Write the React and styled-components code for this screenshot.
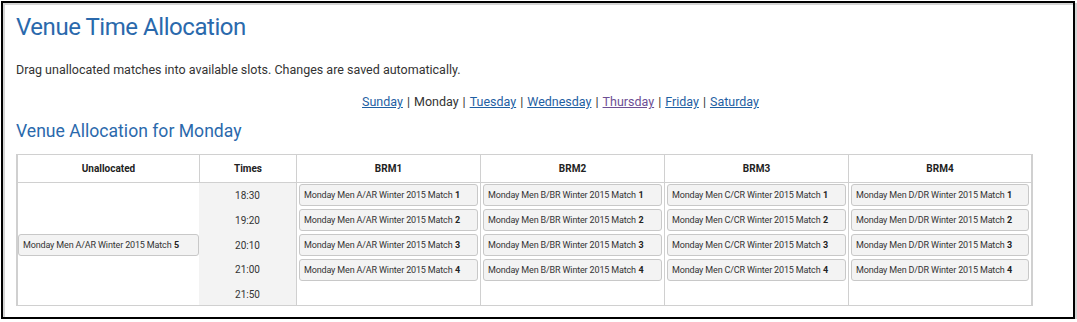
import React from 'react';
import styled, { createGlobalStyle } from 'styled-components';

const Global = createGlobalStyle`
  html, body { margin: 0; padding: 0; background: #fff; }
  body { font-family: Roboto, "Liberation Sans", sans-serif; color: #333; }
`;

const Frame = styled.div`
  box-sizing: border-box;
  margin: 1px 0 0 1px;
  width: 1074px;
  height: 318px;
  border: 2px solid #000;
  box-shadow: inset 2px 2px 0 #d4d4d4, 2px 2px 0 #d4d4d4;
  padding: 0 0 0 13px;
  overflow: hidden;
`;

const Title = styled.h1`
  margin: 9px 0 0;
  font-size: 24px;
  letter-spacing: -0.45px;
  line-height: 30px;
  font-weight: 400;
  color: #2a69ac;
`;

const Intro = styled.p`
  margin: 20px 0 0;
  font-size: 12.5px;
  line-height: 16px;
`;

const DayNav = styled.nav`
  margin: 16px 0 0;
  padding-left: 32px;
  display: flex;
  justify-content: center;
  font-size: 12.5px;
  line-height: 16px;
  color: #333;
`;

const DayLink = styled.a`
  color: ${p => (p.$visited ? '#6d4f94' : '#1f5fa3')};
  text-decoration: underline;
  cursor: pointer;
`;

const Sep = styled.span`
  margin: 0 4px;
`;

const SubTitle = styled.h2`
  margin: 10px 0 0;
  font-size: 17.6px;
  line-height: 22px;
  font-weight: 400;
  color: #2a69ac;
`;

const Grid = styled.div`
  margin-top: 12px;
  width: max-content;
  display: grid;
  grid-template-columns: 181px 97px 184px 184px 184px 183px;
  border: 1px solid #d0d0d0;
  border-left-width: 2px;
  border-right-width: 2px;
`;

const HeadCell = styled.div`
  height: 27px;
  display: flex;
  align-items: center;
  justify-content: center;
  font-size: 10px;
  font-weight: 700;
  color: #222;
  border-bottom: 1px solid #d0d0d0;
  border-left: ${p => (p.$first ? 'none' : '1px solid #d0d0d0')};
`;

const UnallocatedCol = styled.div`
  display: flex;
  flex-direction: column;
  justify-content: center;
  padding-top: 1px;
`;

const TimesCol = styled.div`
  background: #f3f3f3;
  display: flex;
  flex-direction: column;
`;

const TimeRow = styled.div`
  box-sizing: border-box;
  height: 24.75px;
  padding-top: 7px;
  line-height: 12px;
  text-align: center;
  font-size: 10px;
  color: #333;
  &:last-child { height: 23px; }
`;

const SlotCol = styled.div`
  border-left: 1px solid #d0d0d0;
  display: flex;
  flex-direction: column;
  gap: 3px;
  padding: 1px 2px 0 2px;
`;

const Match = styled.div`
  box-sizing: border-box;
  height: 22px;
  flex: none;
  display: flex;
  align-items: center;
  padding: 0 4px;
  background: #f3f3f3;
  border: 1px solid #c8c8c8;
  border-radius: 3px;
  font-size: 9px;
  letter-spacing: -0.15px;
  color: #333;
  white-space: nowrap;
  b { font-weight: 700; color: #222; margin-left: 2.5px; }
`;

const days = ['Sunday', 'Monday', 'Tuesday', 'Wednesday', 'Thursday', 'Friday', 'Saturday'];
const venues = [
  { name: 'BRM1', div: 'A/AR' },
  { name: 'BRM2', div: 'B/BR' },
  { name: 'BRM3', div: 'C/CR' },
  { name: 'BRM4', div: 'D/DR' },
];
const times = ['18:30', '19:20', '20:10', '21:00', '21:50'];

const MatchCard = ({ div, n }) => (
  <Match>
    Monday Men {div} Winter 2015 Match<b>{n}</b>
  </Match>
);

export default function App() {
  return (
    <>
      <Global />
      <Frame>
        <Title>Venue Time Allocation</Title>
        <Intro>Drag unallocated matches into available slots. Changes are saved automatically.</Intro>
        <DayNav>
          {days.map((d, i) => (
            <React.Fragment key={d}>
              {i > 0 && <Sep>|</Sep>}
              {d === 'Monday' ? <span>{d}</span> : <DayLink $visited={d === 'Thursday'}>{d}</DayLink>}
            </React.Fragment>
          ))}
        </DayNav>
        <SubTitle>Venue Allocation for Monday</SubTitle>
        <Grid>
          <HeadCell $first>Unallocated</HeadCell>
          <HeadCell>Times</HeadCell>
          {venues.map(v => (
            <HeadCell key={v.name}>{v.name}</HeadCell>
          ))}
          <UnallocatedCol>
            <MatchCard div="A/AR" n={5} />
          </UnallocatedCol>
          <TimesCol>
            {times.map(t => (
              <TimeRow key={t}>{t}</TimeRow>
            ))}
          </TimesCol>
          {venues.map(v => (
            <SlotCol key={v.name}>
              {[1, 2, 3, 4].map(n => (
                <MatchCard key={n} div={v.div} n={n} />
              ))}
            </SlotCol>
          ))}
        </Grid>
      </Frame>
    </>
  );
}
